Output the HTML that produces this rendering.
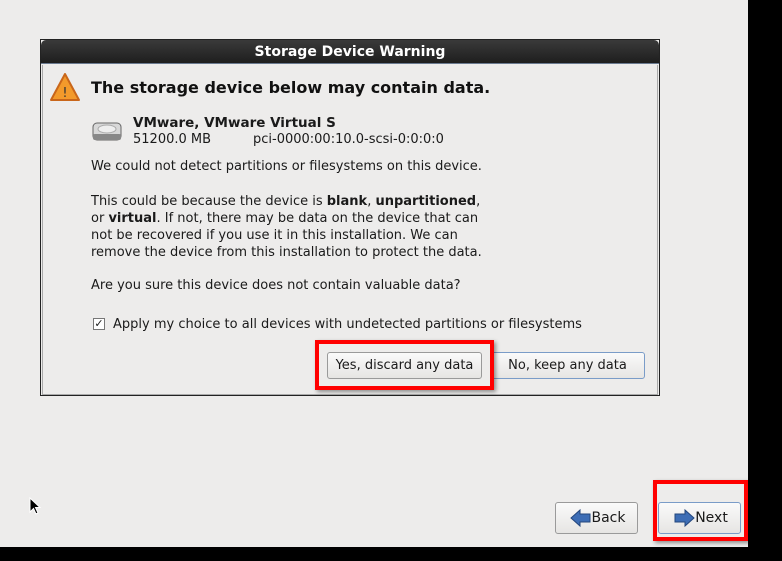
<!DOCTYPE html>
<html><head><style>
*{margin:0;padding:0;box-sizing:border-box}
body{width:782px;height:561px;background:#000;position:relative;overflow:hidden;font-family:"DejaVu Sans","Liberation Sans",sans-serif;font-size:13px;color:#1a1a1a}
#bg{position:absolute;left:0;top:0;width:748px;height:547px;background:#edeceb}
.a{position:absolute;white-space:nowrap}
#dlg{position:absolute;left:40px;top:39px;width:620px;height:357px;border:1px solid #222;background:#edeceb}
#tb{position:absolute;left:0;top:0;width:618px;height:24px;background:linear-gradient(#3a3a3a,#1e1e1e);border-radius:5px 5px 0 0;color:#fff;font-weight:bold;font-size:14px;text-align:center;line-height:24px;border-bottom:1px solid #6a7a90}
#inner{position:absolute;left:1px;top:25px;width:616px;height:330px;border:1px solid #aaa;border-top:none}
.btn{position:absolute;border:1px solid #9a9a9a;border-radius:3px;background:linear-gradient(#fafafa,#e6e5e3);text-align:center;font-size:13px}
.red{position:absolute;border:4px solid #f00;box-shadow:2px 2px 4px rgba(0,0,0,.4)}
</style></head><body>
<div id="bg"></div>
<div id="dlg"><div id="tb">Storage Device Warning</div><div id="inner"></div></div>
<svg class="a" style="left:49px;top:72px" width="32" height="30"><path d="M16 2 L30 28 L2 28 Z" fill="#f39a2b" stroke="#c9661a" stroke-width="2" stroke-linejoin="round"/><text x="16" y="25" font-size="13" text-anchor="middle" fill="#333" font-family="DejaVu Sans">!</text></svg>
<div class="a" style="left:91px;top:78px;font-weight:bold;font-size:16px;color:#111">The storage device below may contain data.</div>
<svg class="a" style="left:91px;top:119px" width="32" height="24"><rect x="2" y="4" width="28" height="17" rx="4" fill="#d8d8d8" stroke="#666"/><rect x="2" y="15" width="28" height="6" rx="2" fill="#888"/><ellipse cx="16" cy="10" rx="9" ry="4" fill="#eee" stroke="#aaa"/></svg>
<div class="a" style="left:133px;top:115px;font-weight:bold;font-size:13.5px">VMware, VMware Virtual S</div>
<div class="a" style="left:133px;top:132px">51200.0 MB</div>
<div class="a" style="left:253px;top:132px">pci-0000:00:10.0-scsi-0:0:0:0</div>
<div class="a" style="left:91px;top:159px">We could not detect partitions or filesystems on this device.</div>
<div class="a" style="left:91px;top:193px;line-height:17px">This could be because the device is <b>blank</b>, <b>unpartitioned</b>,<br>or <b>virtual</b>. If not, there may be data on the device that can<br>not be recovered if you use it in this installation. We can<br>remove the device from this installation to protect the data.</div>
<div class="a" style="left:91px;top:278px">Are you sure this device does not contain valuable data?</div>
<div class="a" style="left:93px;top:318px;width:12px;height:12px;border:1px solid #777;background:#fff;font-size:11px;line-height:10px;text-align:center">✓</div>
<div class="a" style="left:113px;top:317px">Apply my choice to all devices with undetected partitions or filesystems</div>
<div class="btn" style="left:327px;top:352px;width:155px;height:27px;line-height:25px">Yes, discard any data</div>
<div class="btn" style="left:490px;top:352px;width:155px;height:27px;line-height:25px;border-color:#7a9cc8">No, keep any data</div>
<div class="red" style="left:315px;top:340px;width:179px;height:50px"></div>
<div class="btn" style="left:555px;top:502px;width:83px;height:32px;line-height:30px;padding-left:24px;font-size:14px">Back</div>
<svg class="a" style="left:570px;top:508px" width="22" height="20"><path d="M1 10 L10 2 L10 6 L20 6 L20 14 L10 14 L10 18 Z" fill="#3d6db5" stroke="#23467c"/></svg>
<div class="btn" style="left:658px;top:502px;width:83px;height:32px;line-height:30px;padding-left:24px;border-color:#7a9cc8;font-size:14px">Next</div>
<svg class="a" style="left:673px;top:508px" width="22" height="20"><path d="M21 10 L12 2 L12 6 L2 6 L2 14 L12 14 L12 18 Z" fill="#3d6db5" stroke="#23467c"/></svg>
<div class="red" style="left:653px;top:480px;width:95px;height:61px"></div>
<svg class="a" style="left:29px;top:497px" width="14" height="20"><path d="M1 1 L1 15 L4.5 11.5 L7 17 L9 16 L6.5 10.5 L11 10.5 Z" fill="#000" stroke="#fff" stroke-width="1"/></svg>
</body></html>
